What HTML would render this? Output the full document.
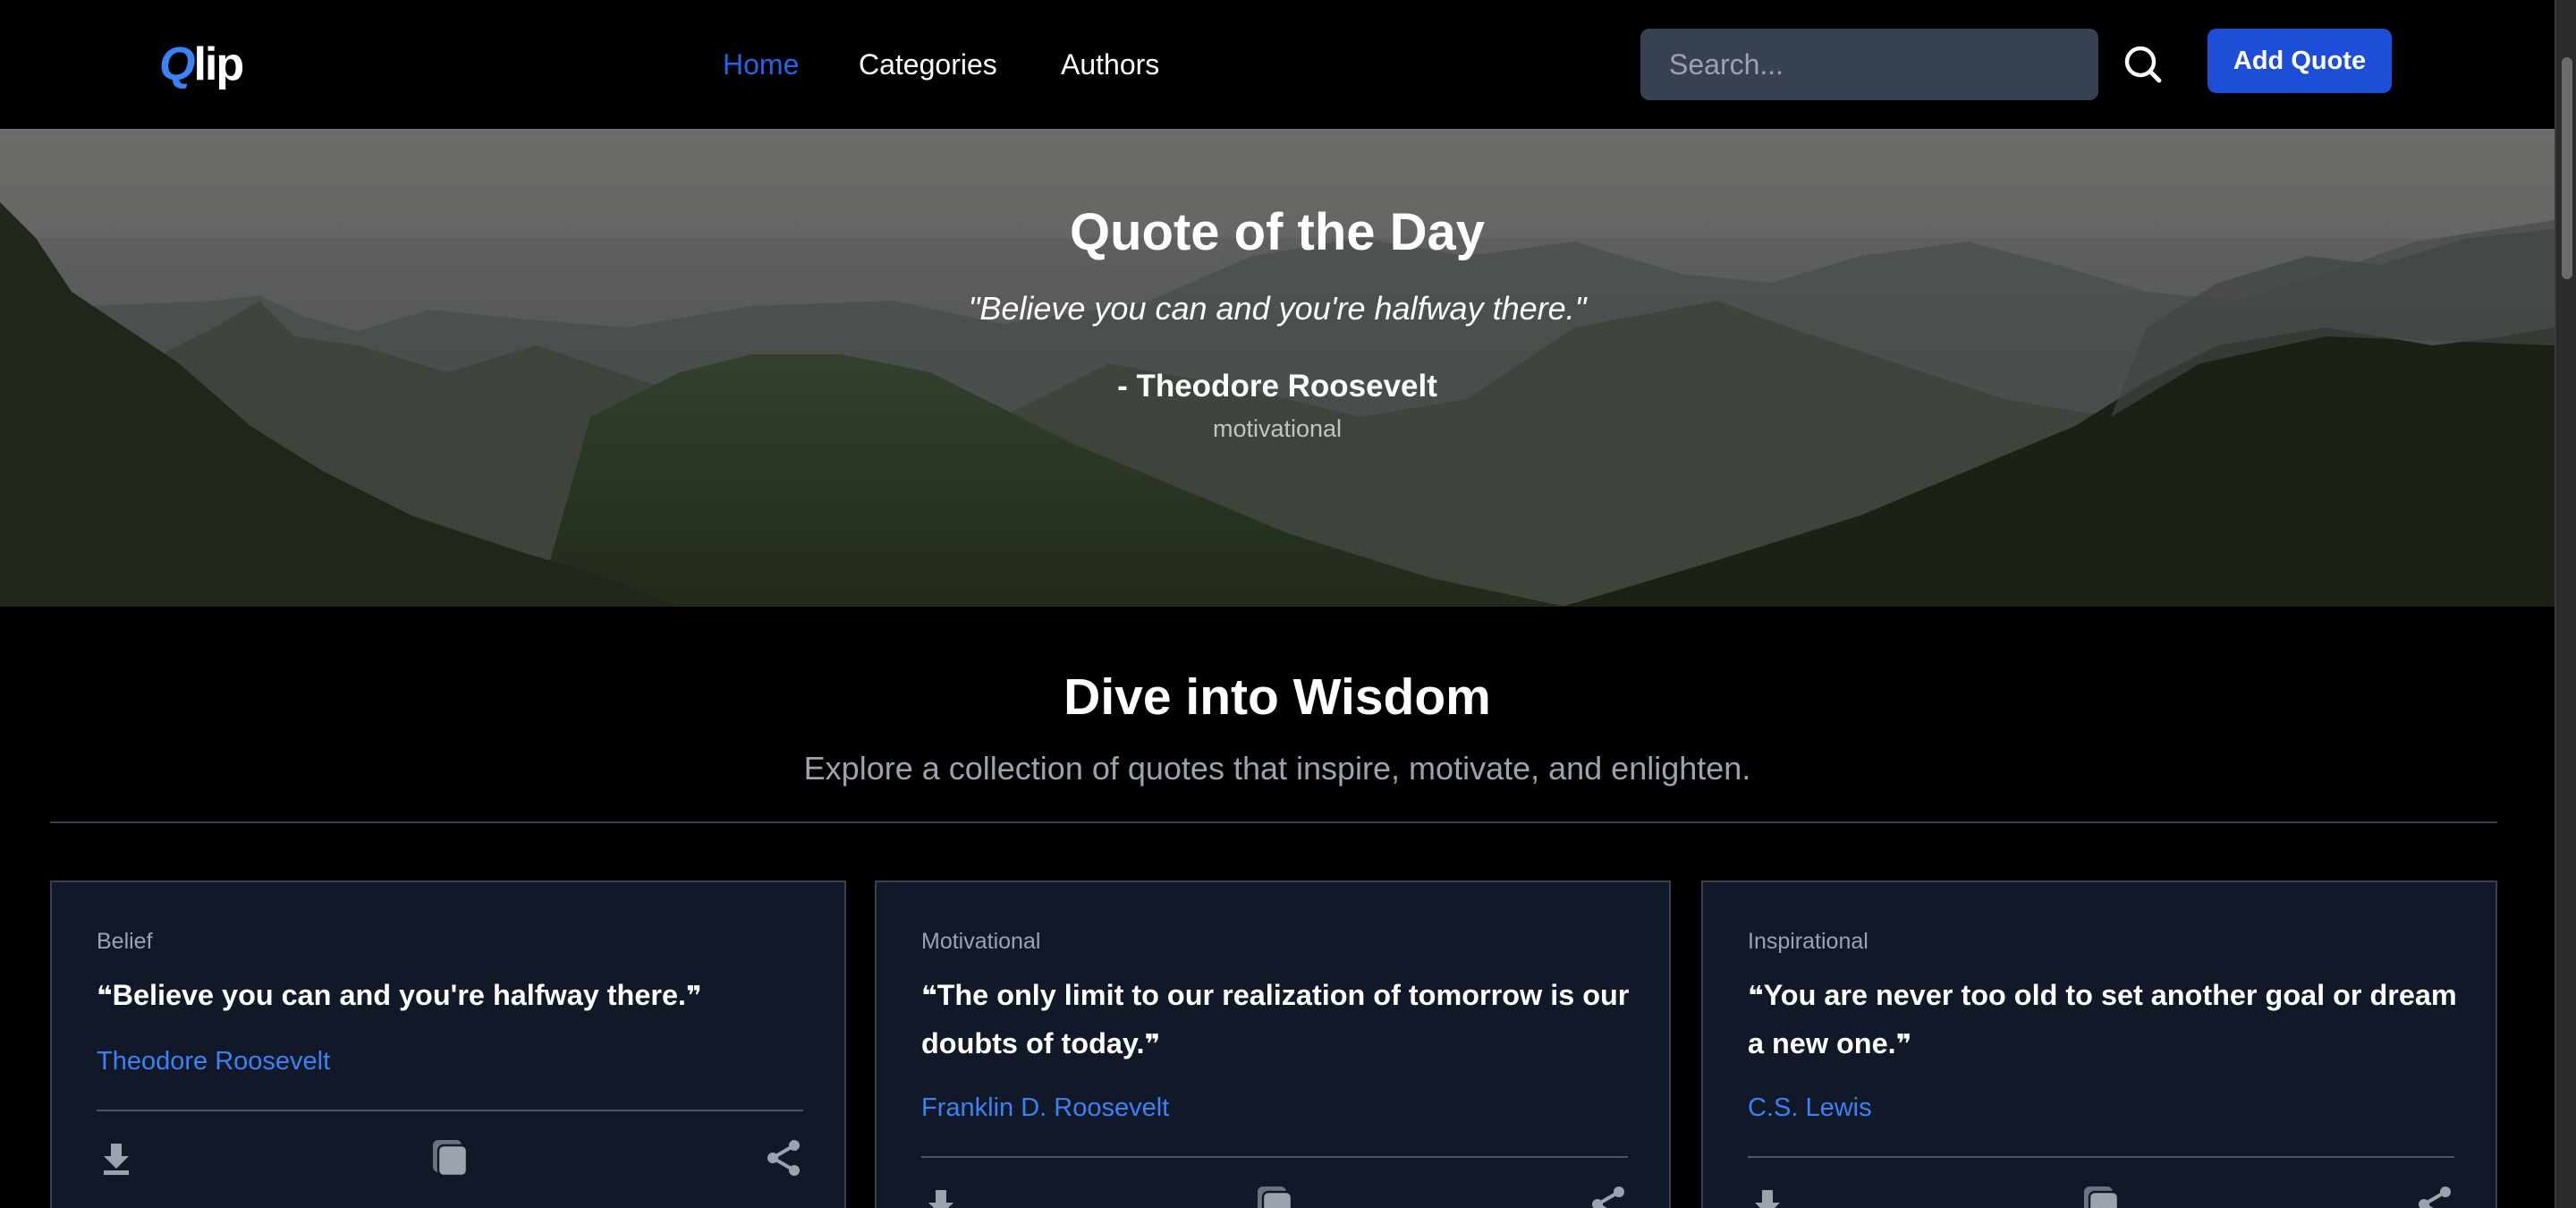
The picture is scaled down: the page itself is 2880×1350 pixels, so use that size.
<!DOCTYPE html>
<html><head><meta charset="utf-8">
<style>
html,body{margin:0;padding:0;background:#000;}
html{height:1350px;overflow:hidden;}
body{zoom:2;width:1440px;height:675px;overflow:hidden;position:relative;font-family:"Liberation Sans",sans-serif;color:#fff;}
.nav{position:absolute;left:0;top:0;width:1428px;height:72px;background:#000;}
.logo{position:absolute;left:89px;top:21px;font-size:26px;font-weight:bold;letter-spacing:-1px;}
.logo span{color:#3b82f6;font-style:italic;}
.links a{position:absolute;top:27px;font-size:16px;color:#fff;text-decoration:none;}
.search{position:absolute;left:917px;top:16px;width:256px;height:40px;background:#374151;border-radius:5px;box-sizing:border-box;padding:11px 16px;color:#9ca3af;font-size:16px;}
.sicon{position:absolute;left:1187px;top:25px;}
.btn{position:absolute;left:1234px;top:16px;width:103px;height:36px;background:#1d4ed8;border-radius:5px;font-size:14.5px;font-weight:bold;text-align:center;line-height:36px;}
.scroll{position:absolute;left:1428px;top:0;width:12px;height:675px;background:#2b2b2b;border-left:1px solid #3a3a3a;box-sizing:border-box;}
.scroll div{position:absolute;left:3px;top:32px;width:6px;height:124px;background:#6b6b6b;border-radius:3px;}
.hero{position:absolute;left:0;top:72px;width:1428px;height:267px;overflow:hidden;border-top:1px solid #6b7280;box-sizing:border-box;}
.hero svg{position:absolute;left:0;top:0;}
.ht{position:absolute;left:0;width:1428px;text-align:center;}
h2{position:absolute;left:0;top:373px;width:1428px;margin:0;text-align:center;font-size:28.5px;font-weight:bold;}
.sub{position:absolute;left:0;top:419px;width:1428px;text-align:center;font-size:18px;color:#9ca3af;}
.hr{position:absolute;left:28px;top:459px;width:1368px;height:1px;background:#374151;}
.card{position:absolute;top:492px;width:445px;height:183px;background:#111827;border:1px solid #374151;border-bottom:none;box-sizing:border-box;overflow:hidden;}
.cat{position:absolute;left:25px;top:26px;font-size:12.5px;color:#9ca3af;}
.q{position:absolute;left:25px;top:50px;width:400px;font-size:16.2px;font-weight:bold;line-height:26px;white-space:nowrap;}
.q i{font-style:normal;font-family:"DejaVu Sans",sans-serif;font-size:15px;}
.au{position:absolute;left:25px;font-size:14.5px;color:#3b82f6;}
.chr{position:absolute;left:25px;width:395px;height:1px;background:#4b5563;}
.ic{position:absolute;}
</style></head><body>
<div class="nav">
 <div class="logo"><span>Q</span>lip</div>
 <div class="links"><a style="left:404px;color:#2563eb">Home</a><a style="left:480px">Categories</a><a style="left:593px">Authors</a></div>
 <div class="search">Search...</div>
 <svg class="sicon" width="22" height="22" viewBox="0 0 22 22"><circle cx="9.5" cy="9.5" r="7.5" fill="none" stroke="#fff" stroke-width="2.2"/><line x1="15" y1="15" x2="20" y2="20" stroke="#fff" stroke-width="2.4" stroke-linecap="round"/></svg>
 <div class="btn">Add Quote</div>
</div>
<div class="hero">
<svg width="1428" height="267" viewBox="0 0 1428 267">
<defs>
<linearGradient id="sky" x1="0" y1="0" x2="0" y2="1"><stop offset="0" stop-color="#777775"/><stop offset="0.5" stop-color="#5f6362"/><stop offset="1" stop-color="#555a58"/></linearGradient>
<linearGradient id="far" x1="0" y1="0" x2="0" y2="1"><stop offset="0" stop-color="#5a605f"/><stop offset="1" stop-color="#4a524c"/></linearGradient>
<linearGradient id="mid" x1="0" y1="0" x2="0" y2="1"><stop offset="0" stop-color="#3a4a34"/><stop offset="1" stop-color="#27301f"/></linearGradient>
</defs>
<rect width="1428" height="267" fill="url(#sky)"/>
<rect width="1428" height="60" fill="#7d7d7a" opacity="0.5"/>
<path d="M0 100 L120 95 L145 92 L170 104 L200 112 L240 100 L290 105 L350 110 L420 98 L500 95 L560 108 L640 96 L700 70 L760 60 L820 70 L880 62 L940 80 L990 85 L1040 70 L1100 62 L1150 75 L1200 90 L1250 95 L1300 80 L1350 62 L1428 50 L1428 267 L0 267Z" fill="url(#far)"/>
<path d="M60 140 L120 110 L145 95 L165 115 L200 120 L250 135 L300 120 L360 140 L420 160 L500 150 L560 160 L620 130 L700 145 L760 160 L820 150 L880 110 L960 95 L1000 110 L1060 130 L1120 150 L1180 160 L1250 150 L1300 130 L1428 120 L1428 267 L0 267Z" fill="#464e44" opacity="0.9"/>
<path d="M330 160 L380 135 L420 125 L470 125 L520 135 L560 155 L600 175 L660 200 L720 225 L800 250 L880 267 L300 267Z" fill="url(#mid)"/>
<path d="M0 40 L20 60 L40 90 L70 110 L100 130 L140 165 L180 190 L230 215 L290 235 L340 250 L380 267 L0 267Z" fill="#252d1e"/>
<path d="M870 267 L960 240 L1040 215 L1100 190 L1160 165 L1200 140 L1240 120 L1300 110 L1360 120 L1400 115 L1428 110 L1428 267Z" fill="#20261a"/>
<path d="M1180 160 L1200 110 L1240 85 L1290 70 L1330 75 L1380 60 L1428 55 L1428 120 L1300 115 L1230 130Z" fill="#4a4f4c" opacity="0.7"/>
<rect width="1428" height="267" fill="#000" opacity="0.12"/>
</svg>
 <div class="ht" style="top:40px;font-size:29px;font-weight:bold;">Quote of the Day</div>
 <div class="ht" style="top:89px;font-size:18px;font-style:italic;">"Believe you can and you're halfway there."</div>
 <div class="ht" style="top:133px;font-size:17.5px;font-weight:bold;">- Theodore Roosevelt</div>
 <div class="ht" style="top:159px;font-size:13.5px;color:#c0c4c8;">motivational</div>
</div>
<h2>Dive into Wisdom</h2>
<div class="sub">Explore a collection of quotes that inspire, motivate, and enlighten.</div>
<div class="hr"></div>

<div class="card" style="left:28px">
 <div class="cat">Belief</div>
 <div class="q"><i>❝</i>Believe you can and you're halfway there.<i>❞</i></div>
 <div class="au" style="top:92px">Theodore Roosevelt</div>
 <div class="chr" style="top:127px"></div>
 <svg class="ic" style="left:27px;top:145px" width="18" height="20" viewBox="0 0 18 20"><path d="M6 1h6v7h4l-7 7-7-7h4z" fill="#9ca3af"/><rect x="2" y="16" width="14" height="2.5" fill="#9ca3af"/></svg>
 <svg class="ic" style="left:212px;top:143px" width="22" height="22" viewBox="0 0 22 22"><rect x="1" y="1" width="16" height="18" rx="3" fill="#6b7280"/><rect x="4" y="4" width="16" height="17" rx="3" fill="#9ca3af" stroke="#111827" stroke-width="1.2"/></svg>
 <svg class="ic" style="left:399px;top:143px" width="20" height="22" viewBox="0 0 20 22"><circle cx="16" cy="4" r="3" fill="#9ca3af"/><circle cx="4" cy="11" r="3" fill="#9ca3af"/><circle cx="16" cy="18" r="3" fill="#9ca3af"/><path d="M16 4L4 11L16 18" stroke="#9ca3af" stroke-width="2" fill="none"/></svg>
</div>

<div class="card" style="left:489px">
 <div class="cat">Motivational</div>
 <div class="q"><i>❝</i>The only limit to our realization of tomorrow is our<br>doubts of today.<i>❞</i></div>
 <div class="au" style="top:118px">Franklin D. Roosevelt</div>
 <div class="chr" style="top:153px"></div>
 <svg class="ic" style="left:27px;top:171px" width="18" height="20" viewBox="0 0 18 20"><path d="M6 1h6v7h4l-7 7-7-7h4z" fill="#9ca3af"/><rect x="2" y="16" width="14" height="2.5" fill="#9ca3af"/></svg>
 <svg class="ic" style="left:212px;top:169px" width="22" height="22" viewBox="0 0 22 22"><rect x="1" y="1" width="16" height="18" rx="3" fill="#6b7280"/><rect x="4" y="4" width="16" height="17" rx="3" fill="#9ca3af" stroke="#111827" stroke-width="1.2"/></svg>
 <svg class="ic" style="left:399px;top:169px" width="20" height="22" viewBox="0 0 20 22"><circle cx="16" cy="4" r="3" fill="#9ca3af"/><circle cx="4" cy="11" r="3" fill="#9ca3af"/><circle cx="16" cy="18" r="3" fill="#9ca3af"/><path d="M16 4L4 11L16 18" stroke="#9ca3af" stroke-width="2" fill="none"/></svg>
</div>

<div class="card" style="left:951px">
 <div class="cat">Inspirational</div>
 <div class="q"><i>❝</i>You are never too old to set another goal or dream<br>a new one.<i>❞</i></div>
 <div class="au" style="top:118px">C.S. Lewis</div>
 <div class="chr" style="top:153px"></div>
 <svg class="ic" style="left:27px;top:171px" width="18" height="20" viewBox="0 0 18 20"><path d="M6 1h6v7h4l-7 7-7-7h4z" fill="#9ca3af"/><rect x="2" y="16" width="14" height="2.5" fill="#9ca3af"/></svg>
 <svg class="ic" style="left:212px;top:169px" width="22" height="22" viewBox="0 0 22 22"><rect x="1" y="1" width="16" height="18" rx="3" fill="#6b7280"/><rect x="4" y="4" width="16" height="17" rx="3" fill="#9ca3af" stroke="#111827" stroke-width="1.2"/></svg>
 <svg class="ic" style="left:399px;top:169px" width="20" height="22" viewBox="0 0 20 22"><circle cx="16" cy="4" r="3" fill="#9ca3af"/><circle cx="4" cy="11" r="3" fill="#9ca3af"/><circle cx="16" cy="18" r="3" fill="#9ca3af"/><path d="M16 4L4 11L16 18" stroke="#9ca3af" stroke-width="2" fill="none"/></svg>
</div>

<div class="scroll"><div></div></div>
</body></html>
